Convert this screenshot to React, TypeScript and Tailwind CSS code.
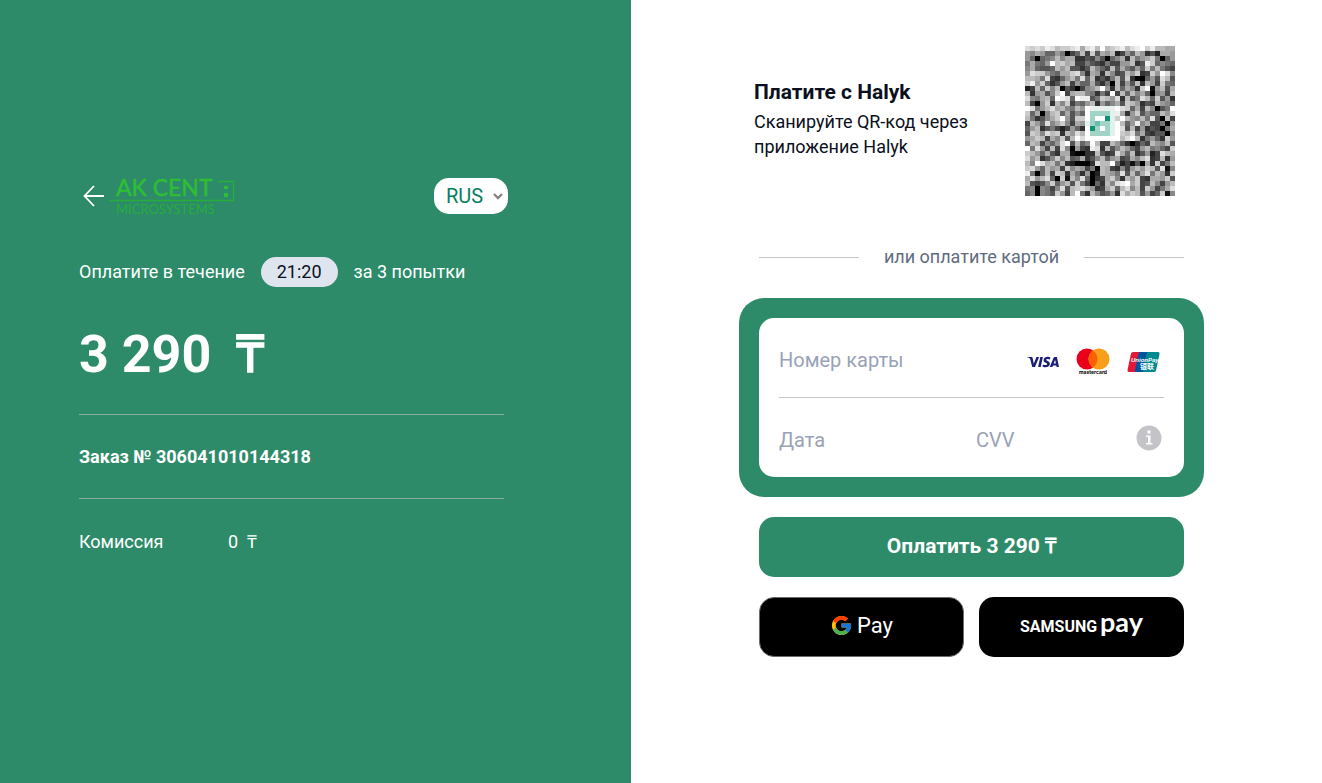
import React from 'react';
import { FcGoogle } from 'react-icons/fc';
import { SiVisa } from 'react-icons/si';

// one hex digit of grey per module, the letters p..s are the brand colours in the middle
const QR_ROWS = [
  'dcdcedbccdeadebfbcdebdefcebbaa',
  '98a96697046b4c5a9b2496b9352aa9',
  '960678b8aa335485068a3b79ac7069',
  '7a769fbcab44754374499b35ec6876',
  '8a6556b9b5535b864b5a7596c7b754',
  '9dcc976aacd83a93b845b9c34c9fd8',
  'bba7d4369b7d6b3537b5c300695db5',
  'ce9c6359b4966a5370b495b3b94c76',
  '24b6c8b0530489bf93b6a83cf19b5a',
  'b39a58cf4abb87374f4b6b8a60894b',
  'd87ab6fed6fee57cb9d3b57db6c593',
  'b409c3b8c4769b3968a5cb9354b986',
  'fd79bdab87b9feqeqefdc6a4b8057f',
  'c6a08bc6a586fppppqea39c5866b9d',
  'b7358acf95ccfpffrqcfb98b7d50b4',
  '4b96d8ac84a9qpsppqfb69e8a44709',
  '69b357424963frpfpqfd5b4935407a',
  '5cb8dbc3b9dbfppppqfcbd7a435508',
  '9acb4a8c5bfdfffffffbdfb37963c9',
  '6ba4869df5b68fb44b9630364b98b5',
  'f7d94b4d80943ed3b58b9649b7864c',
  'cb96a53aa10033b534da6b35924dba',
  'd9b358c8b56a358b69a45a8bd34b39',
  'b8fdab7b320003dbbf624150a3c47b',
  'cd96b9a4c8a9470ba43849b9cb5d18',
  'e706b4cb3a73902ba97d5b6ad7b93c',
  'ad9bd60c1b8d6034ac83b9c43aa9c5',
  'b5458c69b5c74063b8defac45b849b',
  '7808748d5bcdb934ac6bd8b4c947ad',
  '680875c94bf73b85693dacb5946c18',
];

const BRAND: Record<string, string> = {
  p: '#a1d3c7',
  q: '#e0f2ee',
  r: '#0e9175',
  s: '#67bda9',
};

const moduleColor = (c: string) => BRAND[c] ?? `#${c.repeat(6)}`;

const QrCode = () => (
  <svg viewBox="0 0 30 30" className="h-[150px] w-[150px] shrink-0" shapeRendering="crispEdges" role="img" aria-label="QR">
    {QR_ROWS.map((row, y) =>
      row.split('').map((c, x) => <rect key={`${x}-${y}`} x={x} y={y} width="1" height="1" fill={moduleColor(c)} />)
    )}
  </svg>
);

const MerchantLogo = () => (
  <svg width="127" height="40" viewBox="0 0 127 40" fill="#2fbd35" fontFamily="Lato, sans-serif">
    <text x="7" y="20" fontSize="23" stroke="#2fbd35" strokeWidth="0.5">AK CENT</text>
    <path d="M0 24.5H124.5V5.5H109" fill="none" stroke="#27ae3a" strokeWidth="1.4" />
    <path d="M115 10h4v3h-4zM115 17h4v4h-4z" />
    <text x="7" y="38" fontSize="13" fill="#27ad3b">MICROSYSTEMS</text>
  </svg>
);

const Mastercard = () => (
  <svg width="34" height="28" viewBox="0 0 34 28">
    <circle cx="11" cy="11" r="10.5" fill="#eb001b" />
    <circle cx="23" cy="11" r="10.5" fill="#f79e1b" />
    <path d="M17 2.4a10.5 10.5 0 0 1 0 17.2a10.5 10.5 0 0 1 0-17.2z" fill="#ff5f00" />
    <text x="17" y="26" textAnchor="middle" fontSize="5" fontWeight="700" fontFamily="Inter, sans-serif">mastercard</text>
  </svg>
);

const UnionPay = () => (
  <svg width="33" height="22" viewBox="0 0 33 22">
    <path d="M6 1h8L10 21H2Q0 21 .5 19L4 2.500Q4.500 1 6 1z" fill="#e21836" />
    <path d="M13 1h9l-4 20H9Q7.500 21 8 19L11.500 2.500Q12 1 13 1z" fill="#0055a0" />
    <path d="M21 1h10q2 0 1.500 2L29 19.500Q28.500 21 27 21H17.500Q15.500 21 16 19L19.500 2.500Q20 1 21 1z" fill="#008a8f" />
    <text x="4" y="11" fontSize="6" fontWeight="700" fontStyle="italic" fill="#fff" fontFamily="Liberation Sans, sans-serif">UnionPay</text>
    <text x="13" y="18" fontSize="7" fontWeight="700" fill="#fff" fontFamily="Noto Sans CJK SC, sans-serif">银联</text>
  </svg>
);

const SamsungPay = () => (
  <svg width="126" height="34" viewBox="0 0 126 34" fill="#fff">
    <text x="1" y="22" fontSize="16" fontWeight="700" fontFamily="Roboto, sans-serif">SAMSUNG</text>
    <text x="81" y="22" fontSize="27" fontWeight="700" fontFamily="Lato, sans-serif">pay</text>
  </svg>
);

const Line = () => <hr className="border-t border-[#c4c4c8]/60" />;

const OrderPanel = () => (
  <section className="bg-[#2d8b69] py-44 pl-[79px] pr-[60px] text-lg leading-[30px] text-white">
    <div className="max-w-[425px]">
      <div className="-mr-1 flex h-10 items-center">
        <a href="#back" aria-label="Назад" className="ml-1 mr-1">
          <svg width="22" height="22" viewBox="0 0 22 22" fill="none" stroke="#fff" strokeWidth="1.8">
            <path d="M21 11H2M11 1L1.500 11L11 21" />
          </svg>
        </a>
        <MerchantLogo />
        <div className="relative ml-auto">
          <select aria-label="Язык" className="h-9 w-[74px] appearance-none rounded-[15px] bg-white pl-3 text-xl text-[#07805f]">
            <option>RUS</option>
            <option>KAZ</option>
            <option>ENG</option>
          </select>
          <svg width="10" height="7" viewBox="0 0 10 7" className="pointer-events-none absolute right-[5px] top-[15px]" fill="none" stroke="#858585" strokeWidth="2.400">
            <path d="M1 1L5 5L9 1" />
          </svg>
        </div>
      </div>

      <div className="mt-[41px] flex items-center gap-4">
        <span>Оплатите в течение</span>
        <span className="rounded-full bg-[#dfe5ef] px-4 text-[#0b1020]">21:20</span>
        <span>за 3 попытки</span>
      </div>

      <h1 className="mb-7 mt-9 text-[52px] font-bold leading-[63px]">
        3 290 <span className="ml-3">₸</span>
      </h1>

      <Line />
      <p className="pb-[26px] pt-[27px] font-bold">Заказ № 306041010144318</p>
      <Line />
      <dl className="flex pt-7">
        <dt className="w-[149px]">Комиссия</dt>
        <dd>0&nbsp; ₸</dd>
      </dl>
    </div>
  </section>
);

const CardForm = () => {
  const input = 'min-w-0 bg-transparent text-xl text-[#111827] outline-none placeholder:text-[#98a2b8] placeholder:opacity-100';

  return (
    <div className="rounded-[25px] bg-[#2d8b69] p-5">
      <div className="rounded-[15px] bg-white px-5">
        <div className="flex h-20 items-center border-b border-[#c4c4c8] pt-1">
          <input type="text" aria-label="Номер карты" placeholder="Номер карты" className={`${input} flex-1`} />
          <div className="flex items-center gap-[17px] pr-1 pt-1">
            <SiVisa size={32} color="#1a1f71" />
            <Mastercard />
            <UnionPay />
          </div>
        </div>
        <div className="flex h-[79px] items-center pt-1">
          <input type="text" aria-label="Дата" placeholder="Дата" className={`${input} w-[197px]`} />
          <input type="text" aria-label="CVV" placeholder="CVV" className={`${input} w-24 flex-1`} />
          <button type="button" aria-label="Что такое CVV" className="mb-1 mr-[2px]">
            <svg width="26" height="26" viewBox="0 0 26 26">
              <circle cx="13" cy="13" r="12.500" fill="#c4c4c8" />
              <path d="M11.500 5.500h3v3h-3zM10 10.500h4.500v7.500h2v1.500h-6.500v-1.500h2v-6h-2z" fill="#fff" />
            </svg>
          </button>
        </div>
      </div>
    </div>
  );
};

const PaymentPanel = () => (
  <section className="bg-white pl-[108px] pr-[60px] pt-[46px]">
    <div className="max-w-[465px]">
      <div className="flex items-center justify-between pl-[15px] pr-[29px]">
        <div className="pb-1 text-lg leading-[25px] text-[#0b1020]">
          <h2 className="mb-1 text-[21px] font-bold">Платите с Halyk</h2>
          <p className="max-w-[225px]">Сканируйте QR-код через приложение Halyk</p>
        </div>
        <QrCode />
      </div>

      <div className="mb-[26px] mt-[46px] flex items-center gap-[25px] px-5 text-lg leading-[30px] text-[#5f6b80]">
        <span className="h-px flex-1 bg-[#c4c4c8]" />
        <span>или оплатите картой</span>
        <span className="h-px flex-1 bg-[#c4c4c8]" />
      </div>

      <CardForm />

      <div className="px-5 pt-5">
        <button type="button" className="h-[60px] w-full rounded-[15px] bg-[#2d8b69] text-[21px] font-bold text-white">
          Оплатить 3 290 ₸
        </button>
        <div className="mt-5 grid grid-cols-2 gap-[15px]">
          <button type="button" aria-label="Google Pay" className="flex h-[60px] items-center justify-center gap-1 rounded-[15px] border border-[#6b6b6b] bg-black pb-1 text-[22px] text-white">
            <FcGoogle size={23} />
            <span>Pay</span>
          </button>
          <button type="button" aria-label="Samsung Pay" className="flex h-[60px] items-center justify-center rounded-[15px] bg-black">
            <SamsungPay />
          </button>
        </div>
      </div>
    </div>
  </section>
);

const App = () => (
  <main className="grid min-h-screen grid-cols-[631fr_691fr] font-['Roboto','Open_Sans',sans-serif]">
    <OrderPanel />
    <PaymentPanel />
  </main>
);

export default App;
